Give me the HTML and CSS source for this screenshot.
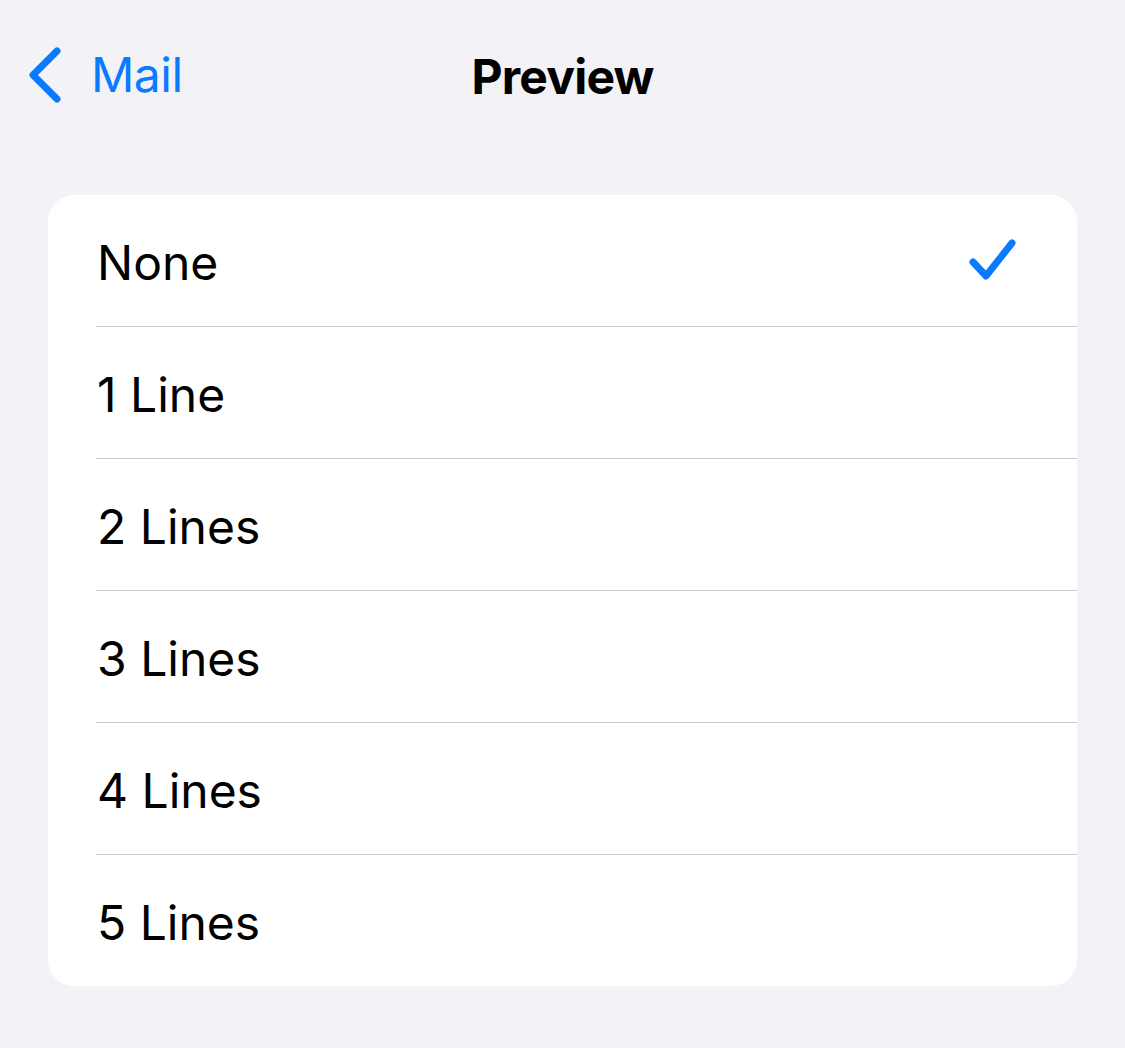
FILE: index.html
```html
<!DOCTYPE html>
<html lang="en">

<head>
    <meta charset="UTF-8">
    <title>Preview</title>
    <link rel="stylesheet" href="styles.css">
</head>

<body>
    <header class="navbar">
        <a class="back" href="#">
            <svg class="chevron" viewBox="0 0 36 58" width="36" height="58">
                <path d="M31 5 L7 29 L31 53" fill="none" stroke="#0a7aff" stroke-width="7" stroke-linecap="round" stroke-linejoin="round"/>
            </svg>
            <span class="back-label">Mail</span>
        </a>
        <h1 class="title">Preview</h1>
    </header>
    <main>
        <ul class="list">
            <li class="row">
                <span class="label">None</span>
                <svg class="check" viewBox="0 0 48 46" width="48" height="46">
                    <path d="M4 24 L17 38 L43 5" fill="none" stroke="#0a7aff" stroke-width="7" stroke-linecap="round" stroke-linejoin="round"/>
                </svg>
            </li>
            <li class="row"><span class="label">1 Line</span></li>
            <li class="row"><span class="label">2 Lines</span></li>
            <li class="row"><span class="label">3 Lines</span></li>
            <li class="row"><span class="label">4 Lines</span></li>
            <li class="row"><span class="label">5 Lines</span></li>
        </ul>
    </main>
</body>

</html>
```

FILE: styles.css
```css
body {
    margin: 0;
    padding: 0;
    background: #f2f2f7;
    font-family: 'Inter', 'Liberation Sans', sans-serif;
    color: #000;
    height: 100vh;
}

.navbar {
    position: relative;
    height: 150px;
    display: flex;
    align-items: flex-start;
    justify-content: center;
}

.back {
    position: absolute;
    left: 26px;
    top: 46px;
    display: flex;
    align-items: center;
    gap: 29px;
    color: #0a7aff;
    text-decoration: none;
}

.chevron {
    display: block;
}

.back-label {
    font-size: 48px;
    line-height: 58px;
    font-weight: 400;
    letter-spacing: -0.5px;
}

.title {
    margin: 48px 0 0;
    font-size: 48px;
    line-height: 58px;
    font-weight: 700;
    letter-spacing: -0.8px;
}

main {
    padding: 45px 48px 0;
}

.list {
    list-style: none;
    margin: 0;
    padding: 0;
    background: #fff;
    border-radius: 26px;
    overflow: hidden;
}

.row {
    height: 131px;
    margin-left: 48px;
    padding-right: 60px;
    display: flex;
    align-items: center;
    justify-content: space-between;
    border-bottom: 1px solid #c8c8cc;
}

.row:last-child {
    border-bottom: none;
}

.label {
    padding: 4px 0 0 1px;
    font-size: 48px;
    font-weight: 400;
    letter-spacing: 0;
}

.check {
    display: block;
}
```
